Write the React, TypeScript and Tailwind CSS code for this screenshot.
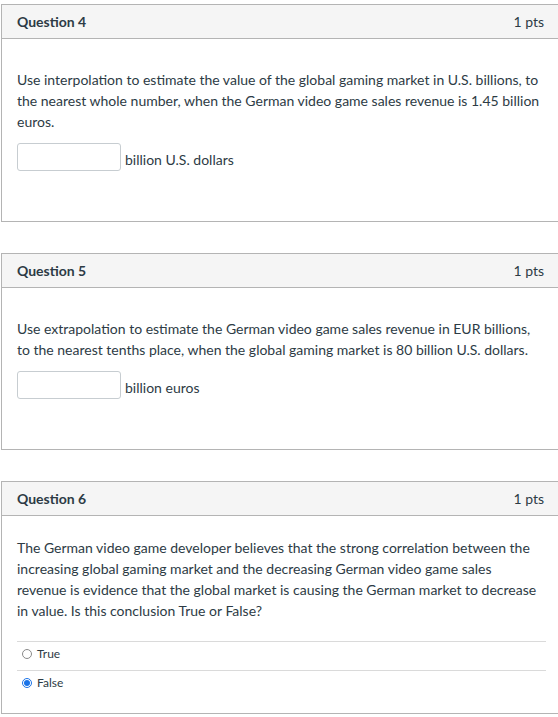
import React from "react";

const font = { fontFamily: "Lato, 'Noto Sans', sans-serif" };

function QuestionCard({
	title,
	points,
	children,
	bodyClass,
}: {
	title: string;
	points: string;
	children: React.ReactNode;
	bodyClass: string;
}) {
	return (
		<div className="w-[560px] border border-[#b4b4b4] bg-white">
			<div className="flex h-[34px] items-center justify-between border-b border-[#b4b4b4] bg-[#f5f5f5] pl-[15px] pr-4">
				<span className="text-[14px] font-bold text-[#2d3b45]">{title}</span>
				<span className="text-[14px] text-[#2d3b45]">{points}</span>
			</div>
			<div className={bodyClass}>{children}</div>
		</div>
	);
}

function AnswerInput({ label }: { label: string }) {
	return (
		<div className="mt-[11px] flex items-center">
			<div className="h-[28px] w-[104px] rounded-[3px] border border-[#c7cdd1] bg-white" />
			<span className="ml-[4px] pt-[4px] text-[14px] text-[#2d3b45]">{label}</span>
		</div>
	);
}

function Radio({ label, checked }: { label: string; checked: boolean }) {
	return (
		<div className="flex h-[29px] items-center border-t border-[#dadada] pb-[5px] pl-[5px]">
			{checked ? (
				<span className="flex h-[10px] w-[10px] items-center justify-center rounded-full border border-[#1a73e8] bg-white">
					<span className="h-[6px] w-[6px] rounded-full bg-[#1a73e8]" />
				</span>
			) : (
				<span className="h-[10px] w-[10px] rounded-full border border-[#8a8a8a] bg-white" />
			)}
			<span className="ml-[5px] text-[12px] text-[#2d3b45]">{label}</span>
		</div>
	);
}

export default function App() {
	return (
		<div className="w-[558px] overflow-x-hidden bg-white" style={font}>
			<div className="flex flex-col gap-[31px] pl-[1px] pt-[4px] pb-[4px]">
				<QuestionCard title="Question 4" points="1 pts" bodyClass="pl-[15px] pr-4 pt-[30px] pb-[50px]">
					<p className="w-[540px] text-[14px] leading-[21px] text-[#2d3b45]">
						Use interpolation to estimate the value of the global gaming market in U.S. billions, to
						<br />
						the nearest whole number, when the German video game sales revenue is 1.45 billion
						<br />
						euros.
					</p>
					<AnswerInput label="billion U.S. dollars" />
				</QuestionCard>

				<QuestionCard title="Question 5" points="1 pts" bodyClass="pl-[15px] pr-4 pt-[30px] pb-[50px]">
					<p className="w-[540px] text-[14px] leading-[21px] text-[#2d3b45]">
						Use extrapolation to estimate the German video game sales revenue in EUR billions,
						<br />
						to the nearest tenths place, when the global gaming market is 80 billion U.S. dollars.
					</p>
					<AnswerInput label="billion euros" />
				</QuestionCard>

				<QuestionCard title="Question 6" points="1 pts" bodyClass="pl-[15px] pr-4 pt-[21px] pb-[14px]">
					<p className="w-[540px] text-[14px] leading-[21px] text-[#2d3b45]">
						The German video game developer believes that the strong correlation between the
						<br />
						increasing global gaming market and the decreasing German video game sales
						<br />
						revenue is evidence that the global market is causing the German market to decrease
						<br />
						in value. Is this conclusion True or False?
					</p>
					<div className="mt-[20px] w-[529px]">
						<Radio label="True" checked={false} />
						<Radio label="False" checked={true} />
					</div>
				</QuestionCard>
			</div>
		</div>
	);
}
